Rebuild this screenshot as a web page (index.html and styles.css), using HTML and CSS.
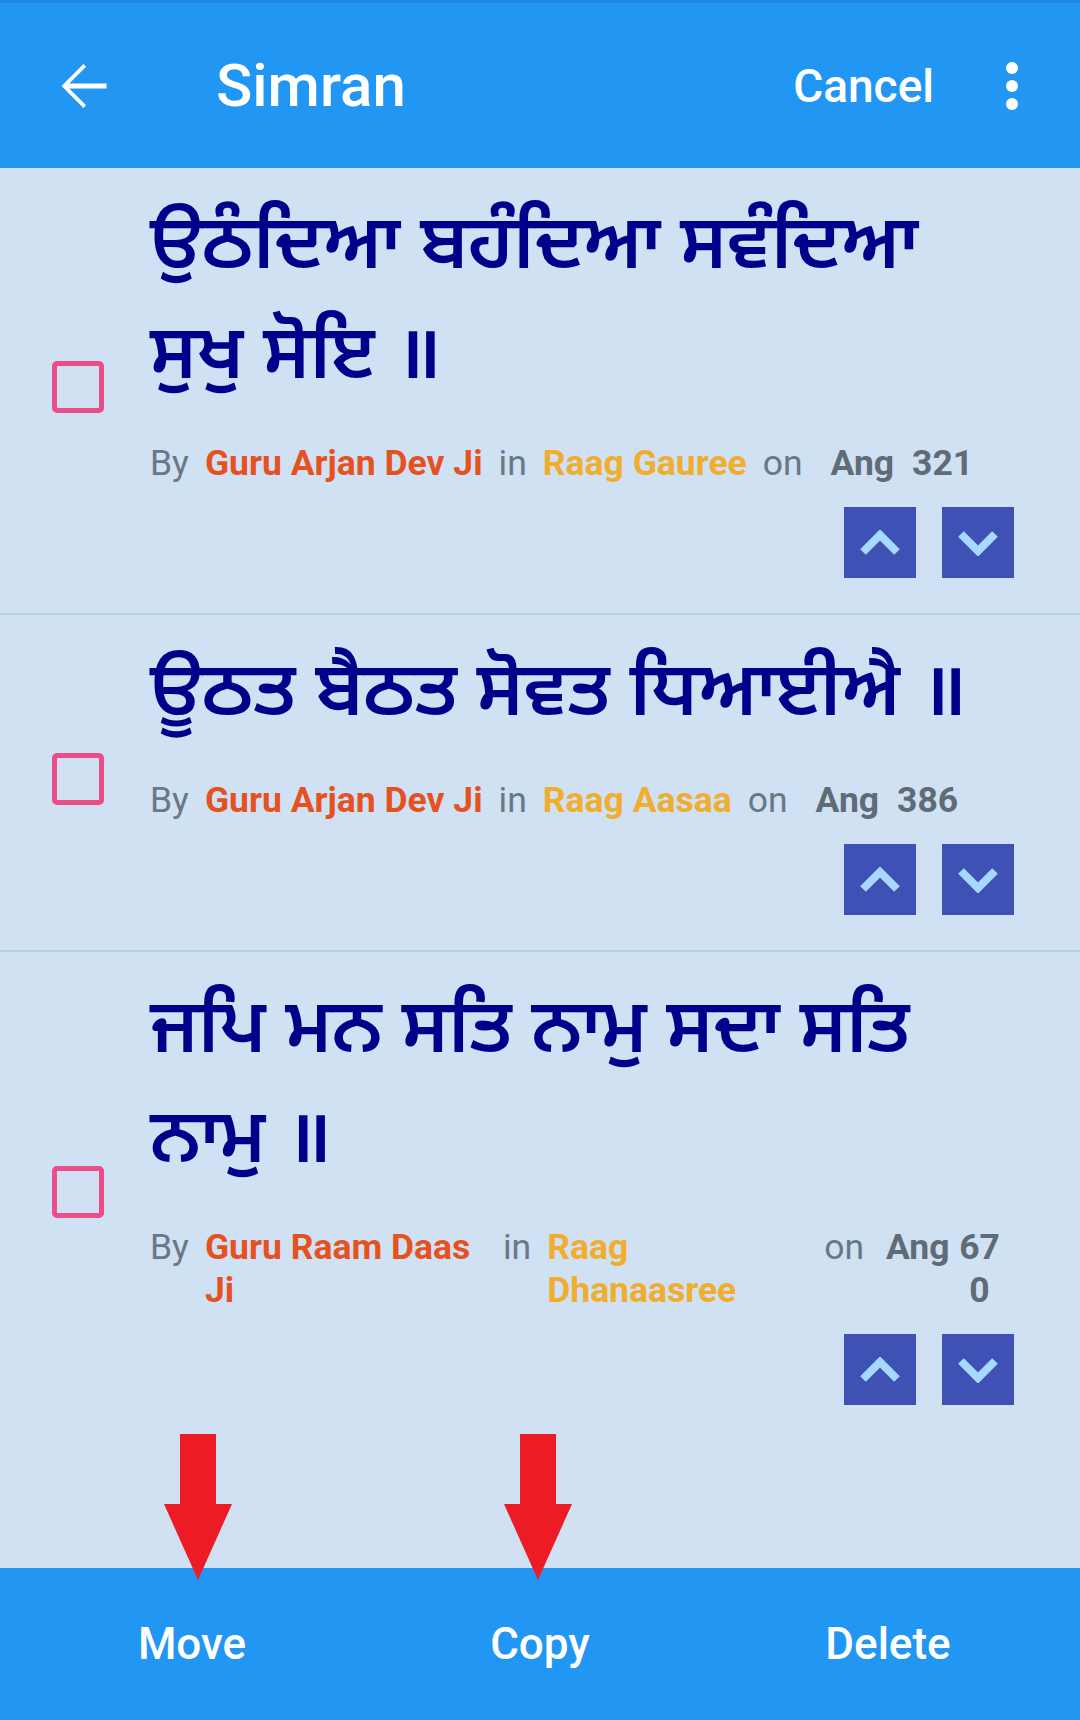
FILE: index.html
```html
<!DOCTYPE html>
<html lang="pa">
<head>
<meta charset="utf-8">
<title>Simran</title>
<link rel="stylesheet" href="styles.css">
</head>
<body>
<div class="page">
  <header class="appbar">
    <svg class="back" viewBox="4 4 16 16" width="49" height="48" aria-hidden="true"><path fill="#fff" d="M20 11.2H7.6l5.6-5.6L12.3 4.7 5 12l7.3 7.3.9-.9-5.6-5.6H20z"/></svg>
    <h1 class="title">Simran</h1>
    <span class="cancel">Cancel</span>
    <span class="dots"><i></i><i></i><i></i></span>
  </header>

  <main class="list">
    <section class="item">
      <div class="check-col"><span class="check"></span></div>
      <div class="body">
        <p class="gurbani">ਉਠੰਦਿਆ ਬਹੰਦਿਆ ਸਵੰਦਿਆ ਸੁਖੁ ਸੋਇ ॥</p>
        <div class="meta">
          <span class="word">By</span>
          <span class="author">Guru Arjan Dev Ji</span>
          <span class="word">in</span>
          <span class="raag">Raag Gauree</span>
          <span class="word">on</span>
          <span class="ang">Ang</span>
          <span class="ang num">321</span>
        </div>
        <div class="moves">
          <span class="mv"><svg viewBox="0 0 42 26" width="42" height="26"><polyline points="4,22 21,5 38,22" /></svg></span>
          <span class="mv"><svg viewBox="0 0 42 26" width="42" height="26"><polyline points="4,4 21,21 38,4" /></svg></span>
        </div>
      </div>
    </section>

    <section class="item">
      <div class="check-col"><span class="check"></span></div>
      <div class="body">
        <p class="gurbani">ਊਠਤ ਬੈਠਤ ਸੋਵਤ ਧਿਆਈਐ ॥</p>
        <div class="meta">
          <span class="word">By</span>
          <span class="author">Guru Arjan Dev Ji</span>
          <span class="word">in</span>
          <span class="raag">Raag Aasaa</span>
          <span class="word">on</span>
          <span class="ang">Ang</span>
          <span class="ang num">386</span>
        </div>
        <div class="moves">
          <span class="mv"><svg viewBox="0 0 42 26" width="42" height="26"><polyline points="4,22 21,5 38,22" /></svg></span>
          <span class="mv"><svg viewBox="0 0 42 26" width="42" height="26"><polyline points="4,4 21,21 38,4" /></svg></span>
        </div>
      </div>
    </section>

    <section class="item item--last">
      <div class="check-col"><span class="check"></span></div>
      <div class="body">
        <p class="gurbani">ਜਪਿ ਮਨ ਸਤਿ ਨਾਮੁ ਸਦਾ ਸਤਿ ਨਾਮੁ ॥</p>
        <div class="meta meta--wrap">
          <span class="word">By</span>
          <span class="author w-author">Guru Raam Daas Ji</span>
          <span class="word">in</span>
          <span class="raag w-raag">Raag Dhanaasree</span>
          <span class="word w-on">on</span>
          <span class="ang">Ang</span>
          <span class="ang num w-num">670</span>
        </div>
        <div class="moves">
          <span class="mv"><svg viewBox="0 0 42 26" width="42" height="26"><polyline points="4,22 21,5 38,22" /></svg></span>
          <span class="mv"><svg viewBox="0 0 42 26" width="42" height="26"><polyline points="4,4 21,21 38,4" /></svg></span>
        </div>
      </div>
    </section>
  </main>

  <footer class="actions">
    <span class="action">Move</span>
    <span class="action">Copy</span>
    <span class="action">Delete</span>
  </footer>

  <svg class="pointer pointer--move" viewBox="0 0 68 146" width="68" height="146" aria-hidden="true"><polygon points="16,0 52,0 52,70 68,70 34,146 0,70 16,70" /></svg>
  <svg class="pointer pointer--copy" viewBox="0 0 68 146" width="68" height="146" aria-hidden="true"><polygon points="16,0 52,0 52,70 68,70 34,146 0,70 16,70" /></svg>
</div>
</body>
</html>
```

FILE: styles.css
```css
* { box-sizing: border-box; }
html, body { margin: 0; padding: 0; }
body {
  width: 1080px;
  height: 1720px;
  background: #cfe1f3;
  font-family: Roboto, "Noto Sans", sans-serif;
  overflow: hidden;
}
.page {
  position: relative;
  width: 1080px;
  height: 1720px;
  display: flex;
  flex-direction: column;
}
.appbar {
  height: 168px;
  flex: none;
  background: #2196f3;
  border-top: 3px solid #1e88e5;
  display: flex;
  align-items: center;
  padding: 0 62px 0 58px;
  color: #fff;
}
.back { flex: none; display: block; }
.title {
  margin: 0 0 0 109px;
  font-size: 60px;
  font-weight: 500;
  line-height: 1;
}
.cancel {
  margin-left: auto;
  font-size: 46px;
  font-weight: 500;
}
.dots {
  margin-left: 72px;
  width: 12px;
  display: flex;
  flex-direction: column;
  gap: 6px;
}
.dots i {
  display: block;
  width: 12px;
  height: 12px;
  border-radius: 50%;
  background: #fff;
}
.list {
  flex: 1;
}
.item {
  display: flex;
  border-bottom: 2px solid #b9cde2;
  padding: 27px 66px 35px 0;
}
.item--last { border-bottom: none; }
.check-col {
  width: 150px;
  flex: none;
  display: flex;
  align-items: center;
  padding-left: 52px;
}
.check {
  display: block;
  width: 52px;
  height: 52px;
  border: 5px solid #ec4d86;
  border-radius: 5px;
}
.body { flex: 1; min-width: 0; }
.gurbani {
  margin: 0;
  font-family: "Noto Sans Gurmukhi", "Lohit Gurmukhi", "Noto Sans", sans-serif;
  font-size: 75px;
  font-weight: 600;
  line-height: 110px;
  color: #00008b;
}
.meta {
  display: flex;
  align-items: flex-start;
  gap: 16px;
  margin-top: 27px;
  font-size: 35.5px;
  line-height: 43px;
}
.word { color: #6a7784; }
.author { color: #e6521f; font-weight: 700; }
.raag { color: #f0ad2e; font-weight: 700; }
.ang { color: #5f6b76; font-weight: 700; margin-left: 12px; }
.num { margin-left: 2px; }
.w-author { width: 282px; }
.w-raag { width: 261px; }
.meta--wrap .ang { margin-left: 6px; }
.meta--wrap .num { margin-left: -10px; width: 48px; text-align: center; word-break: break-all; }
.moves {
  display: flex;
  justify-content: flex-end;
  gap: 26px;
  margin-top: 22px;
}
.mv {
  width: 72px;
  height: 71px;
  background: #3f51b5;
  display: flex;
  align-items: center;
  justify-content: center;
}
.mv svg polyline {
  fill: none;
  stroke: #a6d9ff;
  stroke-width: 8;
  stroke-linecap: butt;
  stroke-linejoin: miter;
}
.actions {
  height: 152px;
  flex: none;
  background: #2196f3;
  display: flex;
  align-items: center;
  padding: 0 18px;
}
.action {
  flex: 1;
  text-align: center;
  color: #fff;
  font-size: 44px;
  font-weight: 500;
}
.pointer {
  position: absolute;
  top: 1434px;
  fill: #ed1c24;
}
.pointer--move { left: 164px; }
.pointer--copy { left: 504px; }
```
